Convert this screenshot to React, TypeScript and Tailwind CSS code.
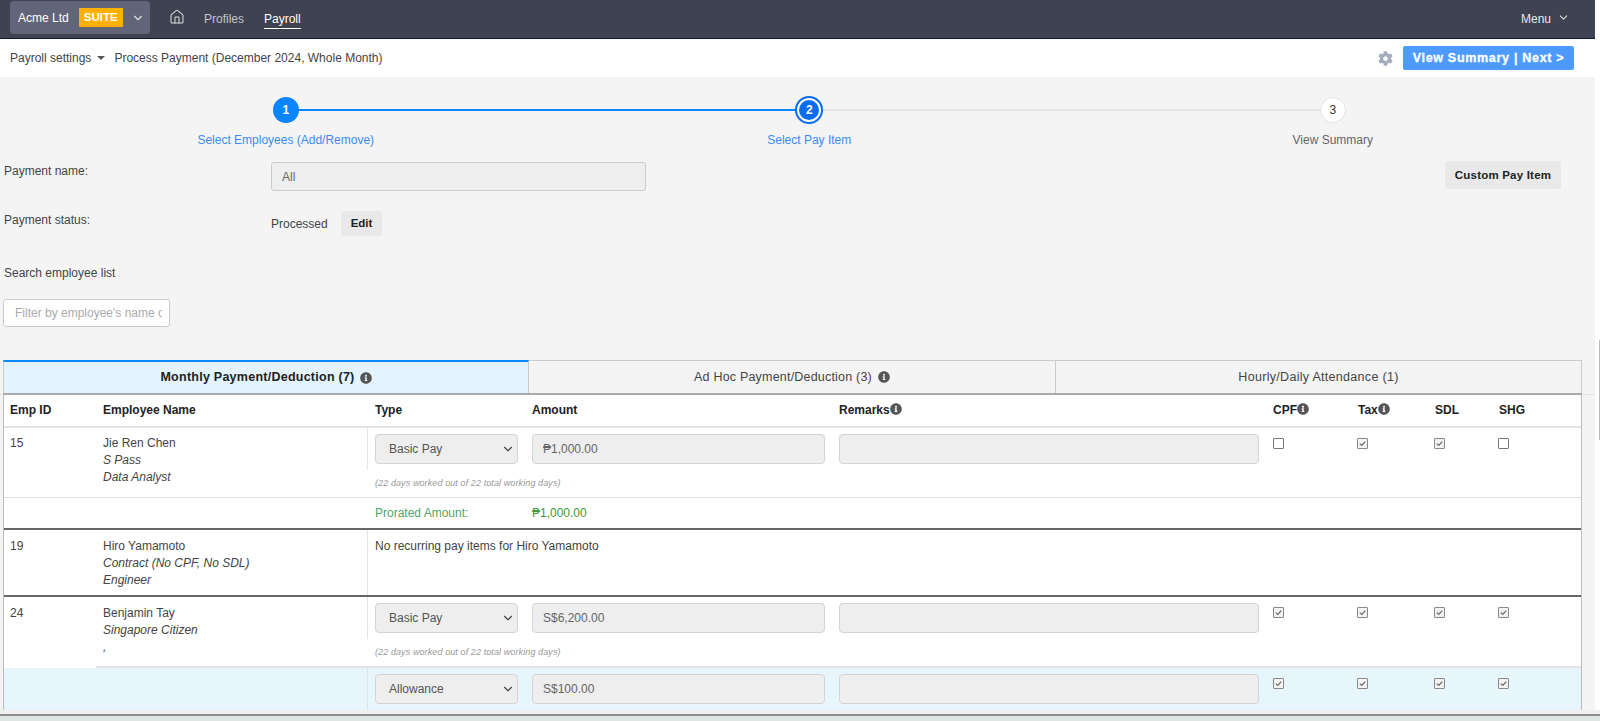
import React from 'react';
import { ChevronDown, Home } from 'lucide-react';
import { FaCog, FaInfoCircle } from 'react-icons/fa';

const GRID = 'grid grid-cols-[164px_307px_434px_85px_77px_64px_1fr]';

function Info() {
  return <FaInfoCircle className="inline-block w-[12px] h-[12px] text-[#555] align-[-1.5px]" />;
}

function Check({ on, shift }: { on: boolean; shift: boolean }) {
  return (
    <div className={`w-[11px] h-[11px] mt-[4px] rounded-[1px] border flex items-center justify-center ${shift ? '-ml-px' : ''} ${on ? 'border-[#888] bg-[#f3f3f3]' : 'border-[#777] bg-white'}`}>
      {on && (
        <svg viewBox="0 0 10 10" className="w-[9px] h-[9px]">
          <path d="M2 5.2 L4.2 7.2 L8 2.8" fill="none" stroke="#666" strokeWidth="1.3" />
        </svg>
      )}
    </div>
  );
}

function PayFields({ type, amount, checks }: { type: string; amount: string; checks: boolean[] }) {
  return (
    <div className={`${GRID} pt-[6px]`}>
      <div className="pl-[7px] relative w-[150px]">
        <select
          disabled
          value={type}
          onChange={() => {}}
          className="appearance-none w-[143px] h-[30px] pl-[13px] bg-[#eee] border border-[#d4d4d4] rounded-[4px] text-[12px] text-[#555] opacity-100"
        >
          <option>{type}</option>
        </select>
        <ChevronDown className="absolute right-[3px] top-[8px] w-[14px] h-[14px] text-[#444] pointer-events-none" />
      </div>
      <input
        readOnly
        value={amount}
        className="w-[293px] h-[30px] pl-[10px] bg-[#eee] border border-[#d4d4d4] rounded-[4px] text-[12px] text-[#666]"
      />
      <input readOnly className="w-[420px] h-[30px] bg-[#eee] border border-[#d4d4d4] rounded-[4px]" />
      {checks.map((c, i) => (
        <Check key={i} on={c} shift={i > 0} />
      ))}
    </div>
  );
}

function Person({ id, name, pass, role, border, tight }: { id: string; name: string; pass: string; role: string; border?: boolean; tight?: boolean }) {
  return (
    <>
      <div className={`w-[92px] shrink-0 pl-[6px] leading-[17px] ${tight ? 'pt-[7px]' : 'pt-[8px]'}`}>{id}</div>
      <div className={`w-[272px] shrink-0 pl-[7px] leading-[17px] ${tight ? 'pt-[7px]' : 'pt-[8px]'} ${border ? 'border-b-2 border-[#e4e4e4]' : ''}`}>
        <div>{name}</div>
        <div className="italic">{pass}</div>
        <div className="italic">{role}</div>
      </div>
    </>
  );
}

const Note = () => (
  <div className="pl-[7px] h-[27px] flex items-center text-[9px] italic text-[#999] tracking-[0.1px]">
    (22 days worked out of 22 total working days)
  </div>
);

function Step({ n, label, state, line }: { n: number; label: string; state: 'done' | 'current' | 'todo'; line?: 'blue' | 'grey' }) {
  return (
    <div className="w-[523.5px] shrink-0 flex flex-col items-center relative">
      {line && (
        <div className={`absolute left-1/2 top-[12px] w-full h-[2px] ${line === 'blue' ? 'bg-[#0a84ff]' : 'bg-[#e6e6e6]'}`} />
      )}
      {state === 'done' && (
        <div className="relative w-[26px] h-[26px] rounded-full bg-[#0a84ff] text-white font-bold text-[12px] flex items-center justify-center">{n}</div>
      )}
      {state === 'current' && (
        <div className="relative w-[28px] h-[28px] -my-px rounded-full bg-white border-2 border-[#0a6cf0] flex items-center justify-center">
          <div className="w-[20px] h-[20px] rounded-full bg-[#0a6cf0] text-white font-bold text-[12px] flex items-center justify-center">{n}</div>
        </div>
      )}
      {state === 'todo' && (
        <div className="relative w-[26px] h-[26px] rounded-full bg-white border border-[#e3e3e3] text-[#333] text-[12px] flex items-center justify-center">{n}</div>
      )}
      <div className={`mt-[9px] leading-[17px] ${state === 'todo' ? 'text-[#666]' : 'text-[#3b8cf5]'}`}>{label}</div>
    </div>
  );
}

export default function App() {
  return (
    <div className="w-[1600px] h-[721px] overflow-hidden flex flex-col font-['Liberation_Sans',Arial,sans-serif] text-[12px] text-[#444] bg-white">
      <div className="flex h-[710px]">
        <div className="w-[1595px] h-[710px] overflow-hidden bg-[#f4f4f4]">
          {/* Navbar */}
          <div className="h-[39px] bg-[#3f4250] border-b border-[#14143a] flex items-start text-[12px]">
            <div className="ml-[10px] mt-[1px] w-[140px] h-[33px] rounded-[4px] bg-[#62657a] flex items-center pl-[8px] text-white">
              <span className="font-medium">Acme Ltd</span>
              <span className="ml-[10px] w-[44px] h-[19px] bg-[#ffb000] rounded-[1px] font-bold text-[11.5px] flex items-center justify-center">SUITE</span>
              <ChevronDown className="ml-[8px] w-[14px] h-[14px] text-[#ddd]" />
            </div>
            <Home className="ml-[19px] mt-[9px] w-[16px] h-[16px] text-[#d8d8d8]" strokeWidth={1.6} />
            <span className="ml-[19px] mt-[10px] text-[#c4c5cb]">Profiles</span>
            <span className="ml-[20px] mt-[10px] h-[19px] text-white border-b border-white font-medium">Payroll</span>
            <span className="ml-auto mt-[10px] text-[#e8e8ea] font-medium">Menu</span>
            <ChevronDown className="ml-[6px] mr-[25px] mt-[11px] w-[13px] h-[13px] text-[#ddd]" />
          </div>

          {/* Sub bar */}
          <div className="h-[38px] bg-white flex items-center pl-[10px]">
            <span>Payroll settings</span>
            <span className="ml-[6px] w-0 h-0 border-x-[4px] border-t-[4px] border-x-transparent border-t-[#555]" />
            <span className="ml-[9px]">Process Payment (December 2024, Whole Month)</span>
            <FaCog className="ml-auto w-[15px] h-[15px] text-[#a3adbd]" />
            <button className="ml-[10px] mr-[21px] w-[171px] h-[24px] rounded-[2px] bg-[#4d9bff] text-white font-bold text-[12.5px] tracking-[0.7px] [-webkit-text-stroke:0.3px_white]">
              View Summary | Next &gt;
            </button>
          </div>

          {/* Stepper */}
          <div className="flex pt-[20px] pl-[24px]">
            <Step n={1} label="Select Employees (Add/Remove)" state="done" line="blue" />
            <Step n={2} label="Select Pay Item" state="current" line="grey" />
            <Step n={3} label="View Summary" state="todo" />
          </div>

          {/* Form */}
          <div className="mt-[13px] flex items-start pl-[4px]">
            <div className="w-[267px] pt-px leading-[17px]">Payment name:</div>
            <input readOnly value="All" className="w-[375px] h-[29px] pl-[10px] bg-[#eee] border border-[#ccc] rounded-[3px] text-[#666]" />
            <button className="ml-auto mr-[34px] -mt-px w-[116px] h-[28px] rounded-[2px] bg-[#e9e9e9] text-[#222] font-bold text-[11.5px] tracking-[0.2px] pt-[2px]">Custom Pay Item</button>
          </div>
          <div className="mt-[20px] flex items-start pl-[4px]">
            <div className="w-[267px] pt-px leading-[17px]">Payment status:</div>
            <div className="w-[70px] h-[25px] flex items-center">Processed</div>
            <button className="w-[41px] h-[25px] rounded-[2px] bg-[#e9e9e9] text-[#222] font-bold text-[11.5px]">Edit</button>
          </div>
          <div className="mt-[28px] pl-[4px] pt-px leading-[17px]">Search employee list</div>
          <div className="mt-[17px] pl-[3px]">
            <input
              readOnly
              placeholder="Filter by employee's name or ID"
              className="w-[167px] h-[28px] pl-[11px] pr-[7px] bg-white border border-[#ccc] rounded-[3px] placeholder:text-[#aaa]"
            />
          </div>

          {/* Tabs */}
          <div className="mt-[33px] h-[35px] border-b border-[#e4e4e4]">
            <div className="ml-[3px] w-[1579px] flex h-[35px] border-b-2 border-[#aaa] text-[12.5px]">
              <div className="w-[526px] border-t-2 border-[#0a8aff] border-x border-x-[#ccc] bg-[#e3f4fe] flex items-center justify-center gap-[5px] font-bold text-[#222] tracking-[0.25px]">
                Monthly Payment/Deduction (7) <Info />
              </div>
              <div className="w-[527px] border-t border-r border-[#ccc] flex items-center justify-center gap-[6px] text-[#444] tracking-[0.2px]">
                Ad Hoc Payment/Deduction (3) <Info />
              </div>
              <div className="flex-1 border-t border-r border-[#ccc] flex items-center justify-center text-[#444] tracking-[0.3px]">
                Hourly/Daily Attendance (1)
              </div>
            </div>
          </div>

          {/* Table */}
          <div className="ml-[3px] w-[1579px] bg-white border-x border-[#bbb]">
            <div className="flex h-[33px] pb-[2px] items-center border-b-2 border-[#e4e4e4] font-bold text-[#222]">
              <div className="w-[92px] pl-[6px]">Emp ID</div>
              <div className="w-[272px] pl-[7px]">Employee Name</div>
              <div className={`${GRID} flex-1`}>
                <div className="pl-[7px]">Type</div>
                <div>Amount</div>
                <div>Remarks<Info /></div>
                <div>CPF<Info /></div>
                <div>Tax<Info /></div>
                <div>SDL</div>
                <div>SHG</div>
              </div>
            </div>

            {/* Jie Ren Chen */}
            <div className="flex h-[70px] border-b border-[#ddd]">
              <Person id="15" name="Jie Ren Chen" pass="S Pass" role="Data Analyst" tight />
              <div className="flex-1">
                <div className="h-[42px] border-l border-[#e4e4e4] -ml-px">
                  <PayFields type="Basic Pay" amount="₱1,000.00" checks={[false, true, true, false]} />
                </div>
                <Note />
              </div>
            </div>
            <div className="flex h-[32px] items-center border-b-2 border-[#666] text-[#4fa66a]">
              <div className="w-[371px]" />
              <div className="w-[157px]">Prorated Amount:</div>
              <div className="text-[#3d9a3d]">₱1,000.00</div>
            </div>

            {/* Hiro Yamamoto */}
            <div className="flex h-[67px] border-b-2 border-[#666]">
              <Person id="19" name="Hiro Yamamoto" pass="Contract (No CPF, No SDL)" role="Engineer" />
              <div className="flex-1 border-l border-[#e4e4e4] -ml-px pl-[7px] pt-[8px] leading-[17px]">
                No recurring pay items for Hiro Yamamoto
              </div>
            </div>

            {/* Benjamin Tay */}
            <div className="flex h-[71px]">
              <Person id="24" name="Benjamin Tay" pass="Singapore Citizen" role="," border />
              <div className="flex-1 border-b-2 border-[#e4e4e4]">
                <div className="h-[42px] border-l border-[#e4e4e4] -ml-px">
                  <PayFields type="Basic Pay" amount="S$6,200.00" checks={[true, true, true, true]} />
                </div>
                <Note />
              </div>
            </div>
            <div className="flex h-[60px] bg-[#e7f5fd]">
              <div className="w-[364px] shrink-0" />
              <div className="flex-1 border-l border-[#dde5ea] -ml-px">
                <PayFields type="Allowance" amount="S$100.00" checks={[true, true, true, true]} />
              </div>
            </div>
          </div>
        </div>

        {/* Scrollbar gutter */}
        <div className="flex-1 bg-white">
          <div className="ml-[4px] mt-[340px] w-[1px] h-[100px] bg-[#bbb]" />
        </div>
      </div>

      {/* Window edge */}
      <div className="h-[4px] bg-[#f0f0f0]" />
      <div className="h-[2px] bg-[#8c8c8c]" />
      <div className="flex-1 bg-[#dfe5e2]" />
    </div>
  );
}
